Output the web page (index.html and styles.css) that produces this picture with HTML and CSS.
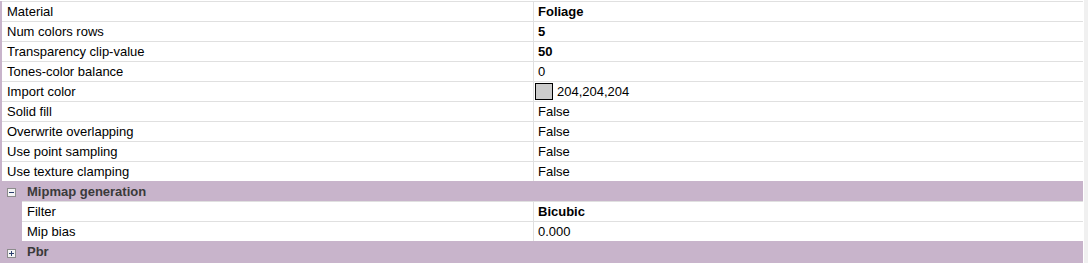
FILE: index.html
```html
<!DOCTYPE html>
<html>
<head>
<meta charset="utf-8">
<link rel="stylesheet" href="styles.css">
</head>
<body>
<div class="page">
  <div class="grid">
    <div class="row"><div class="name">Material</div><div class="value bold">Foliage</div></div>
    <div class="row"><div class="name">Num colors rows</div><div class="value bold">5</div></div>
    <div class="row"><div class="name">Transparency clip-value</div><div class="value bold">50</div></div>
    <div class="row"><div class="name">Tones-color balance</div><div class="value">0</div></div>
    <div class="row"><div class="name">Import color</div><div class="value"><span class="swatch"></span>204,204,204</div></div>
    <div class="row"><div class="name">Solid fill</div><div class="value">False</div></div>
    <div class="row"><div class="name">Overwrite overlapping</div><div class="value">False</div></div>
    <div class="row"><div class="name">Use point sampling</div><div class="value">False</div></div>
    <div class="row"><div class="name">Use texture clamping</div><div class="value">False</div></div>
    <div class="cat">
      <svg class="toggle" width="9" height="9" viewBox="0 0 9 9"><rect x="0.5" y="0.5" width="8" height="8" fill="#f4f4f4" stroke="#8c8c8c"/><rect x="2" y="4" width="5" height="1" fill="#2b3f6e"/></svg>
      <span>Mipmap generation</span>
    </div>
    <div class="row nested"><div class="name">Filter</div><div class="value bold">Bicubic</div></div>
    <div class="row nested"><div class="name">Mip bias</div><div class="value">0.000</div></div>
    <div class="cat last">
      <svg class="toggle" width="9" height="9" viewBox="0 0 9 9"><rect x="0.5" y="0.5" width="8" height="8" fill="#f4f4f4" stroke="#8c8c8c"/><rect x="2" y="4" width="5" height="1" fill="#2b3f6e"/><rect x="4" y="2" width="1" height="5" fill="#2b3f6e"/></svg>
      <span>Pbr</span>
    </div>
  </div>
  <div class="gap"></div>
  <div class="scroll"></div>
</div>
</body>
</html>
```

FILE: styles.css
```css
html, body {
  margin: 0;
  padding: 0;
  background: #ffffff;
}
.page {
  display: flex;
  width: 1088px;
  height: 263px;
  overflow: hidden;
  font-family: "Liberation Sans", Arial, sans-serif;
  font-size: 13px;
  color: #000;
}
.grid {
  width: 1083px;
  flex: none;
  display: flex;
  flex-direction: column;
  background: #c8b4cb;
  border-top: 1px solid #ffffff;
}
.row {
  display: grid;
  grid-template-columns: 532px 1fr;
  margin-left: 2px;
  height: 20px;
  box-sizing: border-box;
  border-top: 1px solid #e0e0e0;
  background: #ffffff;
  line-height: 19px;
}
.row.nested {
  margin-left: 22px;
  grid-template-columns: 512px 1fr;
}
.name {
  padding-left: 5px;
  border-right: 1px solid #e0e0e0;
  white-space: nowrap;
  overflow: hidden;
}
.value {
  padding-left: 4px;
  display: flex;
  align-items: center;
  white-space: nowrap;
}
.bold {
  font-weight: bold;
}
.swatch {
  width: 16px;
  height: 15px;
  border: 1px solid #000;
  background: #cccccc;
  margin-left: -3px;
  margin-right: 4px;
  flex: none;
}
.cat {
  height: 20px;
  display: flex;
  align-items: center;
  padding-left: 7px;
  font-weight: bold;
  color: #3a3a3a;
}
.cat .toggle {
  flex: none;
  margin-right: 11px;
  margin-top: 3px;
}
.cat.last .toggle {
  margin-top: 4px;
}
.gap {
  width: 1px;
  flex: none;
  background: #ffffff;
}
.scroll {
  flex: 1;
  background: #f0f0f0;
}
```
